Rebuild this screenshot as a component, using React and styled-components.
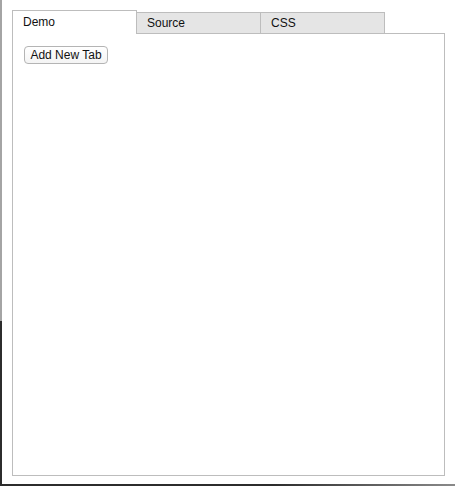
import React, { useState } from "react";
import styled, { createGlobalStyle } from "styled-components";

const Global = createGlobalStyle`
  html, body { margin: 0; padding: 0; background: #fff; }
  body { font-family: "Liberation Sans", Arial, sans-serif; }
`;

const Frame = styled.div`
  width: 455px;
  height: 486px;
  display: flex;
  flex-direction: column;
  overflow: hidden;
`;

const Body = styled.div`
  flex: 1;
  display: flex;
  min-height: 0;
`;

const LeftEdge = styled.div`
  width: 2px;
  flex: none;
  background: linear-gradient(#a4a4a4 0 321px, #2c2c2c 321px);
`;

const BottomEdge = styled.div`
  height: 2px;
  flex: none;
  background: linear-gradient(90deg, #2c2c2c 0 60%, #8a8a8a 100%);
`;

const Main = styled.div`
  flex: 1;
  padding: 10px 0 0 10px;
  display: flex;
  flex-direction: column;
`;

const TabBar = styled.div`
  display: flex;
  align-items: flex-start;
  height: 24px;
  position: relative;
  z-index: 1;
`;

const Tab = styled.div`
  box-sizing: border-box;
  width: 125px;
  margin-left: ${(p) => (p.$first ? 0 : -1)}px;
  border: 1px solid #bdbdbd;
  font-size: 12px;
  color: #111;
  padding-left: 10px;
  cursor: pointer;
  ${(p) =>
    p.$active
      ? `height: 24px; border-bottom: none; background: #fff; padding-top: 4px; position: relative; z-index: 2;`
      : `height: 22px; margin-top: 2px; background: #e5e5e5; padding-top: 3px;`}
`;

const Panel = styled.div`
  box-sizing: border-box;
  width: 433px;
  height: 443px;
  margin-top: -1px;
  border: 1px solid #bdbdbd;
  padding: 11px;
`;

const Button = styled.button`
  box-sizing: border-box;
  height: 18px;
  width: 84px;
  padding: 0;
  border: 1px solid #b4b4b4;
  border-radius: 4px;
  background: linear-gradient(#ffffff, #f4f4f4);
  font-family: "Liberation Sans", Arial, sans-serif;
  font-size: 12px;
  color: #111;
  line-height: 16px;
`;

export default function App() {
  const [tabs, setTabs] = useState(["Demo", "Source", "CSS"]);
  const [active, setActive] = useState(0);
  return (
    <Frame>
      <Global />
      <Body>
        <LeftEdge />
        <Main>
          <TabBar>
            {tabs.map((t, i) => (
              <Tab key={i} $first={i === 0} $active={i === active} onClick={() => setActive(i)}>
                {t}
              </Tab>
            ))}
          </TabBar>
          <Panel>
            {active === 0 && (
              <Button onClick={() => setTabs([...tabs, "New Tab"])}>Add New Tab</Button>
            )}
          </Panel>
        </Main>
      </Body>
      <BottomEdge />
    </Frame>
  );
}
